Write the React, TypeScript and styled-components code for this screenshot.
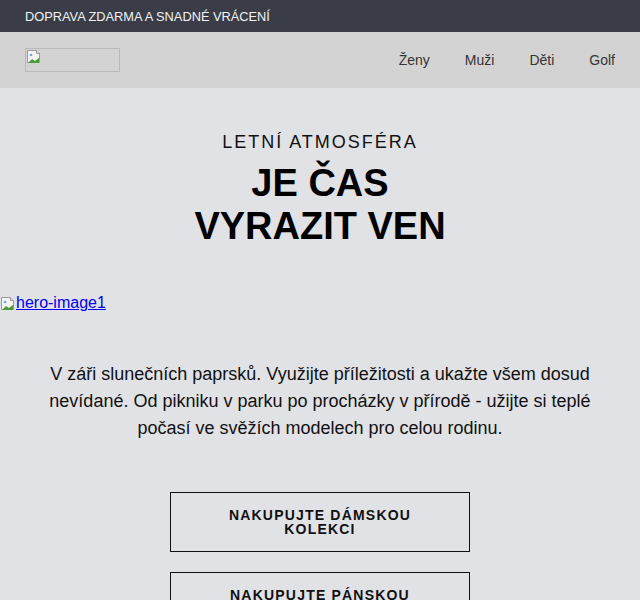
import React from "react";
import styled, { createGlobalStyle } from "styled-components";

const Global = createGlobalStyle`
  html, body { margin: 0; padding: 0; background: #e1e2e6; }
  body { font-family: "Liberation Sans", Arial, sans-serif; }
`;

const TopBar = styled.div`
  height: 32px;
  background: #3a3d47;
  color: #f2f2f2;
  font-size: 12.8px;
  display: flex;
  align-items: center;
  padding: 0 25px;
`;

const Header = styled.header`
  height: 56px;
  background: #d3d3d3;
  display: flex;
  align-items: center;
  justify-content: space-between;
  padding: 0 25px;
`;

const LogoBox = styled.div`
  width: 93px;
  height: 22px;
  border: 1px solid #b9b9b9;
  display: flex;
  align-items: flex-start;
`;

const Nav = styled.nav`
  display: flex;
  gap: 35px;
`;

const NavLink = styled.a`
  font-size: 14px;
  color: #333;
  text-decoration: none;
`;

const Hero = styled.section`
  text-align: center;
  padding-top: 42px;
`;

const Kicker = styled.div`
  font-size: 18px;
  letter-spacing: 2px;
  color: #111;
  line-height: 24px;
`;

const Title = styled.h1`
  margin: 8px 0 0;
  font-size: 38px;
  line-height: 43px;
  font-weight: 700;
  color: #000;
`;

const ImageLink = styled.a`
  display: flex;
  align-items: flex-end;
  margin-top: 46px;
  font-size: 16px;
  color: #0000ee;
  text-decoration: underline;
  height: 18px;
`;

const Text = styled.p`
  margin: 49px 40px 0;
  text-align: center;
  font-size: 18px;
  line-height: 27px;
  color: #111;
`;

const Buttons = styled.div`
  display: flex;
  flex-direction: column;
  align-items: center;
  gap: 20px;
  margin-top: 50px;
`;

const Button = styled.a`
  box-sizing: border-box;
  width: 300px;
  height: 60px;
  border: 1px solid #111;
  display: flex;
  align-items: center;
  justify-content: center;
  text-align: center;
  padding: 0 50px;
  font-size: 14px;
  font-weight: 700;
  letter-spacing: 1.2px;
  line-height: 14px;
  color: #111;
  text-decoration: none;
`;

const BrokenIcon = () => (
  <svg width="16" height="16" viewBox="0 0 16 16">
    <path d="M1.5 1.5h9l3 3v9h-12z" fill="#f4f4f4" stroke="#9a9a9a" />
    <path d="M10.5 1.5v3h3" fill="#e6e6e6" stroke="#9a9a9a" />
    <path d="M2 14l4-4 3 2 4-3v5H2z" fill="#4a9a3a" />
    <circle cx="5" cy="6" r="1.3" fill="#6fa8dc" />
  </svg>
);

export default function App() {
  return (
    <>
      <Global />
      <TopBar>DOPRAVA ZDARMA A SNADNÉ VRÁCENÍ</TopBar>
      <Header>
        <LogoBox>
          <BrokenIcon />
        </LogoBox>
        <Nav>
          <NavLink>Ženy</NavLink>
          <NavLink>Muži</NavLink>
          <NavLink>Děti</NavLink>
          <NavLink>Golf</NavLink>
        </Nav>
      </Header>
      <Hero>
        <Kicker>LETNÍ ATMOSFÉRA</Kicker>
        <Title>
          JE ČAS
          <br />
          VYRAZIT VEN
        </Title>
      </Hero>
      <ImageLink href="#">
        <BrokenIcon />
        hero-image1
      </ImageLink>
      <Text>
        V záři slunečních paprsků. Využijte příležitosti a ukažte všem dosud
        nevídané. Od pikniku v parku po procházky v přírodě - užijte si teplé
        počasí ve svěžích modelech pro celou rodinu.
      </Text>
      <Buttons>
        <Button href="#">NAKUPUJTE DÁMSKOU KOLEKCI</Button>
        <Button href="#">NAKUPUJTE PÁNSKOU KOLEKCI</Button>
      </Buttons>
    </>
  );
}
